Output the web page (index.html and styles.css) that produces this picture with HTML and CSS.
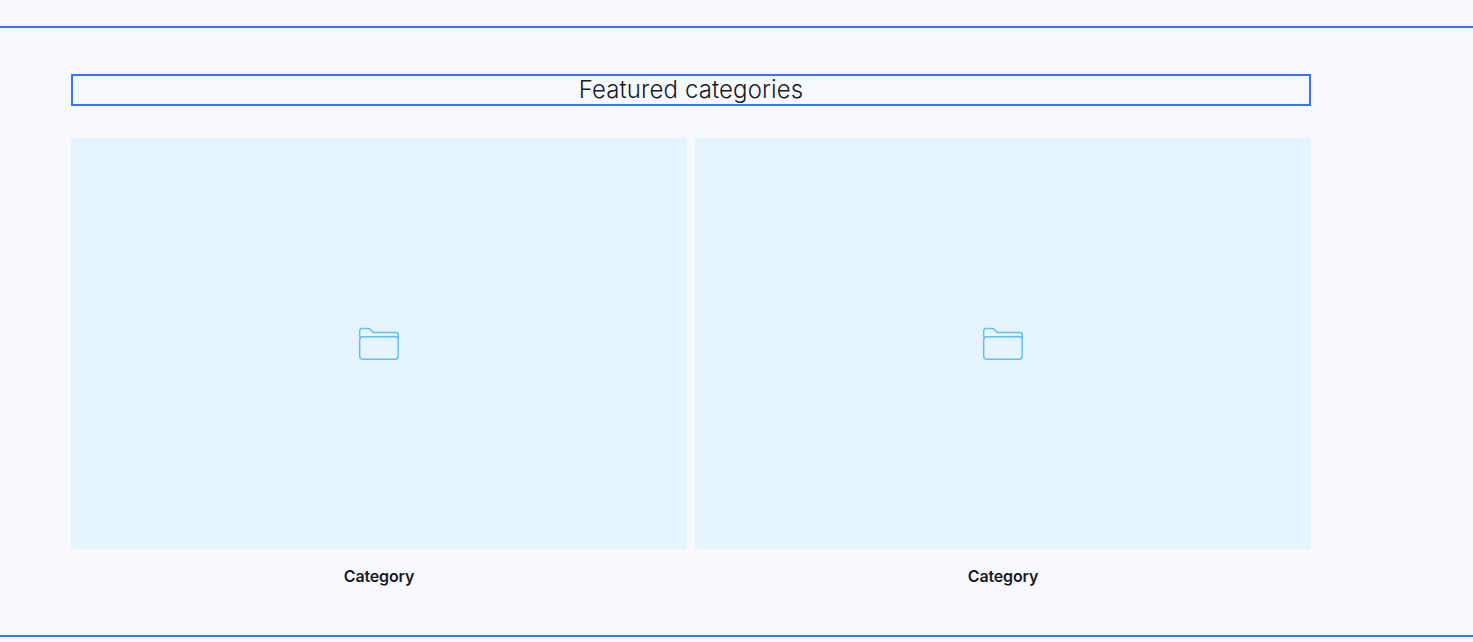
FILE: index.html
```html
<!DOCTYPE html>
<html lang="en">
<head>
<meta charset="utf-8">
<title>Featured categories</title>
<link rel="stylesheet" href="styles.css">
</head>
<body>
<section class="section">
  <h2 class="title">Featured categories</h2>
  <div class="grid">
    <a class="card" href="#">
      <div class="media">
        <svg class="folder" width="42" height="34" viewBox="0 0 42 34" fill="none" stroke="currentColor" stroke-width="1.5"><path d="M1.7 10V3.6A2 2 0 0 1 3.7 1.6H10.8a1.5 1.5 0 0 1 1 .4L15.5 5.6H38.2a2 2 0 0 1 2 2V11"/><rect x="1.7" y="9.7" width="38.5" height="22.6" rx="3"/></svg>
      </div>
      <p class="label">Category</p>
    </a>
    <a class="card" href="#">
      <div class="media">
        <svg class="folder" width="42" height="34" viewBox="0 0 42 34" fill="none" stroke="currentColor" stroke-width="1.5"><path d="M1.7 10V3.6A2 2 0 0 1 3.7 1.6H10.8a1.5 1.5 0 0 1 1 .4L15.5 5.6H38.2a2 2 0 0 1 2 2V11"/><rect x="1.7" y="9.7" width="38.5" height="22.6" rx="3"/></svg>
      </div>
      <p class="label">Category</p>
    </a>
  </div>
</section>
</body>
</html>
```
FILE: styles.css
```css
html, body {
  margin: 0;
  background: #f7f9ff;
}
body {
  height: 642px;
  padding-top: 26px;
  box-sizing: border-box;
  overflow: hidden;
  font-family: "Inter", "Liberation Sans", sans-serif;
  color: #1a1b20;
}
.section {
  height: 611px;
  box-sizing: border-box;
  border-top: 2px solid #3575fd;
  border-bottom: 2px solid #3575fd;
  padding: 46px 162px 0 71px;
}
.title {
  margin: 0 0 32px;
  height: 32px;
  box-sizing: border-box;
  border: 2px solid #3575fd;
  font-size: 24px;
  font-weight: 300;
  line-height: 28px;
  letter-spacing: 0.12px;
  text-align: center;
}
.grid {
  display: grid;
  grid-template-columns: 616px 616px;
  gap: 8px;
}
.card {
  display: block;
  color: inherit;
  text-decoration: none;
}
.media {
  height: 411px;
  background: #e5f4fd;
  color: #62bff9;
  display: flex;
  align-items: center;
  justify-content: center;
}
.label {
  margin: 17px 0 0;
  font-size: 16px;
  line-height: 20px;
  font-weight: 600;
  letter-spacing: -0.17px;
  text-align: center;
}
```
